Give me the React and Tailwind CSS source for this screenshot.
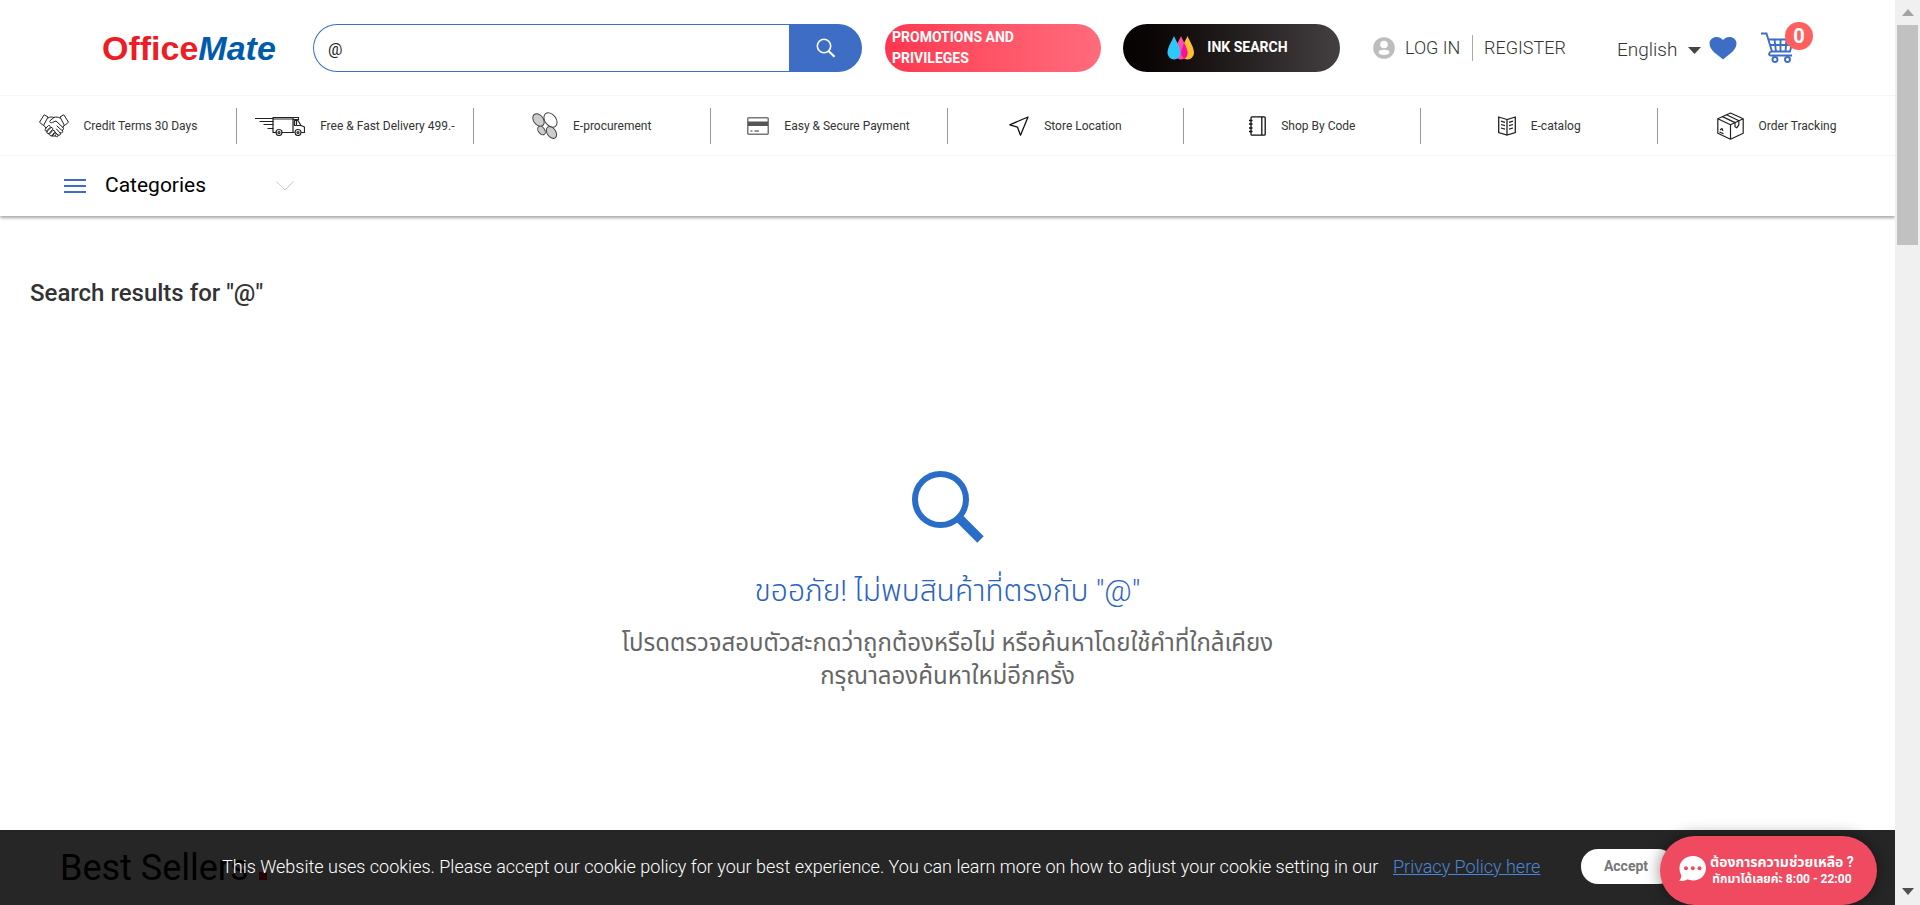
import React from "react";

const line = { fill: "none", stroke: "#222", strokeWidth: 1.2, strokeLinejoin: "round", strokeLinecap: "round" };

function Handshake() {
  return (
    <svg width="30" height="24" viewBox="0 0 30 24" {...line} strokeWidth="1">
      <path d="M5.5 1 9 3 4.500 11.500.800 8.500ZM24.500 1 21 3l4.500 8.500 3.700-3Z" />
      <path d="M9 4c2-1.500 4-1 6-.5 2-.8 4-.5 6 .5M15 3.500l-4 3.200c-1 1.300.8 2.800 2.500 1.700L17 7l7 6.500c1.500 2-.5 3.300-2 2.200L18 12" />
      <path d="M5 11.500l2 2.500M7 14l2.500-2.500c1.500-.5 2 1 1.500 2L7.500 17C6 17.500 5.500 15.500 7 14ZM8 17.500l4-4c1.800-.5 2 1.500 1.500 2L10 19.500c-1.500.8-2.500-.8-2-2ZM10.500 20l3.500-3.700c1.500-.3 2 1 1.500 2L13 21.500c-1 .8-2.800 0-2.500-1.500ZM13 22l2.500-2.500c1.500-.3 2.200 1.300.5 2.500h-3" />
      <path d="M16 22c2 1.500 3.500.5 3-1l-3-3M19 21c2 1 3-.5 2.200-2L17.500 15M21.500 18.800c2 .8 2.800-1 2-2.500M25 11.500l-1 2" />
    </svg>
  );
}

function Truck() {
  return (
    <svg width="50" height="20" viewBox="0 0 50 20" {...line}>
      <path d="M0 2.500h18M5 5.500h13M9 8.500h9M13 12.500h5" />
      <path d="M21 16.500h-3V1.500h25.500v2H38M18 3h20M38 1.500v15M27 16.500h12M46.500 16.500H49.500V11L46 9.500 43 4.500h-3.500V9.500H46M41.500 5v3.500" />
      <circle cx="24" cy="16.500" r="3" /><circle cx="24" cy="16.500" r="1" />
      <circle cx="43" cy="16.500" r="3" /><circle cx="43" cy="16.500" r="1" />
    </svg>
  );
}

function Petals() {
  return (
    <svg width="26" height="27" viewBox="0 0 26 27" fill="#ccc" stroke="#444" strokeWidth="1">
      <ellipse cx="6.500" cy="8" rx="4.800" ry="7" transform="rotate(-38 6.500 8)" />
      <ellipse cx="18.500" cy="8" rx="5.500" ry="8" transform="rotate(-38 18.500 8)" fill="#fff" />
      <ellipse cx="9.500" cy="18.500" rx="3.200" ry="4.800" transform="rotate(-35 9.500 18.500)" />
      <ellipse cx="19.500" cy="20.500" rx="4.300" ry="6.500" transform="rotate(-35 19.500 20.500)" />
    </svg>
  );
}

function Card() {
  return (
    <svg width="22" height="18" viewBox="0 0 22 18">
      <rect x=".75" y=".75" width="20.500" height="16.500" rx="1" fill="none" stroke="#777" strokeWidth="1.500" />
      <path d="M1 4.500h20v4.500H1Z" fill="#555" />
      <path d="M3.500 14h2M7.500 14h4.500" stroke="#777" strokeWidth="1.500" />
    </svg>
  );
}

function Arrow() {
  return (
    <svg width="20" height="20" viewBox="0 0 20 20" fill="none" stroke="#111" strokeWidth="1.300" strokeLinejoin="round">
      <path d="M19 1 .8 8.800 8.500 11.200 11.500 19.200Z" />
    </svg>
  );
}

function Notebook() {
  return (
    <svg width="17" height="20" viewBox="0 0 17 20" fill="none" stroke="#111" strokeWidth="1.300">
      <rect x="2" y=".8" width="14.200" height="18.400" rx="1" />
      <path d="M12.800 1v18" />
      <path d="M0 4.500h3.500M0 8h3.500M0 12h3.500M0 15.500h3.500" />
    </svg>
  );
}

function Book() {
  return (
    <svg width="18" height="20" viewBox="0 0 18 20" fill="none" stroke="#222" strokeWidth="1.300">
      <path d="M9 3.500.7 1v15.500L9 19l8.300-2.500V1ZM9 3.500V19" />
      <path d="M3 5.200l4 1.200M3 8.500l4 1.200M3 12l4 1.200M15 5.200l-4 1.200M15 8.500l-4 1.200M15 12l-4 1.200" />
    </svg>
  );
}

function Box() {
  return (
    <svg width="27" height="28" viewBox="0 0 27 28" fill="none" stroke="#222" strokeWidth="1.200" strokeLinejoin="round">
      <path d="M13.500 1 .8 6.800v14.400l12.700 6 12.700-6V6.800ZM.8 6.800l12.700 6 12.700-6M13.500 12.800v14.400" />
      <path d="M9.500 2.800 22 8.800M5.500 4.600 18 10.600M18 10.600v4.200l1.800 1 2-3V8.800M2.500 20l4 1.800M3 18l2-1.500 1 2.500" />
    </svg>
  );
}

const features = [
  ["Credit Terms 30 Days", Handshake],
  ["Free & Fast Delivery 499.-", Truck],
  ["E-procurement", Petals],
  ["Easy & Secure Payment", Card],
  ["Store Location", Arrow],
  ["Shop By Code", Notebook],
  ["E-catalog", Book],
  ["Order Tracking", Box],
];

function TopBar() {
  return (
    <div className="flex h-24 items-center border-b border-[#f5f5f5] pl-[102px] pr-[82px]">
      <a href="#" aria-label="OfficeMate" className="mr-[35px] w-44 whitespace-nowrap font-['Liberation_Sans',sans-serif] text-[34px] font-bold leading-9 text-[#ee1c25]">
        Office<span className="italic text-[#005bab]">Mate</span>
      </a>
      <form className="mr-[23px] flex h-12 flex-1" onSubmit={(e) => e.preventDefault()}>
        <input aria-label="Search products" defaultValue="@" className="min-w-0 flex-1 rounded-l-3xl border border-r-0 border-[#3d6dc4] px-3.5 pt-1 text-[16px] text-[#222] outline-none" />
        <button aria-label="Search" className="flex w-[73px] items-center justify-center rounded-r-3xl bg-[#3d6dc4]">
          <svg width="20" height="20" viewBox="0 0 20 20" fill="none" stroke="#fff" strokeWidth="1.600">
            <circle cx="8" cy="8" r="6.700" />
            <path d="m12.500 13 6 5.800" strokeWidth="2.200" />
          </svg>
        </button>
      </form>
      <a href="#" className="mr-[22px] flex h-12 w-[216px] items-center rounded-3xl bg-linear-to-r from-[#ff354f] to-[#ff6b7d] px-[7px] text-[14px] font-bold leading-[21px] text-white">
        <span className="w-36">PROMOTIONS AND PRIVILEGES</span>
      </a>
      <a href="#" className="mr-[33px] flex h-12 w-[217px] items-center justify-center gap-3 rounded-3xl bg-linear-to-r from-[#050202] to-[#444041] pr-2 text-[14px] font-bold text-white">
        <svg width="28" height="24" viewBox="0 0 28 24">
          <path d="M20.500 0C23 6 27 11 27 17a6.500 6.500 0 0 1-13 0C14 11 18 6 20.500 0Z" fill="#fdc02f" />
          <path d="M14 0c2.500 6 6.500 11 6.500 17a6.500 6.500 0 0 1-13 0C7.500 11 11.500 6 14 0Z" fill="#ff4fa8" />
          <path d="M17 7c2 4 3.500 7 3.500 10 0 3-1.500 5-3.500 6-1-1.500-3-3-3-6s2-6 3-10Z" fill="#fb0f9a" />
          <path d="M7 0c2.500 6 6.500 11 6.500 17a6.500 6.500 0 0 1-13 0C.5 11 4.500 6 7 0Z" fill="#2fc8fb" />
        </svg>
        INK SEARCH
      </a>
      <div className="flex items-center text-[18px] font-light text-[#333]">
        <svg className="mr-2.5" width="22" height="22" viewBox="0 0 22 22">
          <circle cx="11" cy="11" r="10.800" fill="#bdbdbd" />
          <circle cx="11" cy="7.500" r="3.800" fill="#fff" />
          <path d="M5.500 15c0-3 11-3 11 0 0 4-11 4-11 0Z" fill="#fff" />
        </svg>
        <a href="#" className="w-[67px]">LOG IN</a>
        <a href="#" className="w-[145px] border-l border-[#aaa] pl-[11px] leading-[26px]">REGISTER</a>
        <label className="relative flex items-center pt-1.5">
          <select aria-label="Language" className="w-[84px] appearance-none bg-transparent text-[19px] font-light outline-none">
            <option>English</option>
          </select>
          <svg className="pointer-events-none absolute right-0" width="13" height="7" viewBox="0 0 13 7"><path d="M0 0h13L6.500 7Z" fill="#444" /></svg>
        </label>
        <a href="#" aria-label="Wish list" className="ml-2">
          <svg width="28" height="24" viewBox="0 0 28 24"><path d="M14 23.500C9 19 .5 14.500.500 7.500.5 1 9.500-1.500 14 4 18.500-1.500 27.500 1 27.500 7.500c0 7-8.500 11.500-13.500 16Z" fill="#3d6dc4" /></svg>
        </a>
        <a href="#" aria-label="Cart, 0 items" className="relative ml-6 w-[52px]">
          <svg width="34" height="31" viewBox="0 0 34 31" fill="none" stroke="#3d6dc4" strokeWidth="1.900">
            <path d="M0 1.500h5.500l5.500 18M7 7.500h25l-3 12H10.500M8.500 13h22M13.500 7.500l1.500 12M19.500 7.500v12M25.500 7.500l-1 12M11 19.500c-3 0-4 4-1.500 4H31" />
            <circle cx="14" cy="27.500" r="2.500" /><circle cx="26.500" cy="27.500" r="2.500" />
          </svg>
          <span className="absolute -top-2.5 right-0 flex size-7 items-center justify-center rounded-full bg-[#ff605f] text-[20px] font-bold text-white">0</span>
        </a>
      </div>
    </div>
  );
}

function SiteHeader() {
  return (
    <header className="bg-white shadow-[0_2px_3px_rgba(0,0,0,0.35)]">
      <TopBar />
      <nav aria-label="Services" className="grid h-[60px] grid-cols-8 items-center border-b border-[#f5f5f5]">
        {features.map(([label, Icon], i) => (
          <a href="#" key={label} className={`flex h-9 items-center justify-center gap-[15px] whitespace-nowrap text-[12px] text-[#333] ${i < 7 ? "border-r border-[#999]" : ""}`}>
            <Icon />
            {label}
          </a>
        ))}
      </nav>
      <button className="flex h-[60px] items-center pl-16 text-[21px] text-black">
        <svg className="mr-[19px]" width="22" height="14" viewBox="0 0 22 14" stroke="#3d6dc4" strokeWidth="1.800"><path d="M0 1h22M0 7h22M0 13h22" /></svg>
        <span className="w-[171px] text-left">Categories</span>
        <svg width="18" height="10" viewBox="0 0 18 10" fill="none" stroke="#ccc"><path d="m.5.500 8.500 8.500L17.500.500" /></svg>
      </button>
    </header>
  );
}

function CookieBar() {
  return (
    <div className="absolute inset-x-0 bottom-0 flex h-[75px] items-center bg-black/85 pb-0.5 pl-[222px] text-[18px] text-white">
      <p className="w-[1171px] whitespace-nowrap font-light">
        This Website uses cookies. Please accept our cookie policy for your best experience. You can learn more on how to adjust your cookie setting in our
      </p>
      <a href="#" className="w-[188px] font-light text-[#4b86d8] underline">Privacy Policy here</a>
      <button className="h-[35px] w-[94px] rounded-[17px] bg-white pr-1 text-[14px] font-bold text-[#777]">Accept</button>
    </div>
  );
}

function ChatButton() {
  return (
    <button className="absolute bottom-0 right-[18px] flex h-[69px] w-[217px] items-center gap-1 rounded-[35px] bg-[#f04a60] pl-[19px] text-white shadow-[0_0_16px_rgba(0,0,0,0.45)]">
      <svg className="mb-1" width="27" height="25" viewBox="0 0 27 25">
        <path d="M14 0C21.500 0 27 5 27 12s-5.500 12.500-13 12.500c-2.500 0-4-.5-5.500-1.200C6 25 3 25.200.2 24.500 2 23 2.500 21 2 18.500 1 17 .5 14.500.5 12 .5 5 6.500 0 14 0Z" fill="#fff" />
        <circle cx="7" cy="12.200" r="2" fill="#f04a60" /><circle cx="13.800" cy="12.200" r="2" fill="#f04a60" /><circle cx="20.500" cy="12.200" r="2" fill="#f04a60" />
      </svg>
      <span className="whitespace-nowrap text-center font-bold">
        <span className="block text-[14px] leading-[17px]">ต้องการความช่วยเหลือ ?</span>
        <span className="block text-[12px] leading-[17px]">ทักมาได้เลยค่ะ 8:00 - 22:00</span>
      </span>
    </button>
  );
}

function ScrollBar() {
  return (
    <div aria-hidden="true" className="flex w-[25px] shrink-0 flex-col items-center justify-between bg-[#f0f0f0] pb-2.5">
      <div className="flex w-[21px] flex-col items-center">
        <svg className="my-[9px]" width="12" height="7" viewBox="0 0 12 7"><path d="M6 0l6 7H0Z" fill="#a3a3a3" /></svg>
        <div className="h-[220px] w-full bg-[#c1c1c1]" />
      </div>
      <svg width="12" height="7" viewBox="0 0 12 7"><path d="M0 0h12L6 7Z" fill="#505050" /></svg>
    </div>
  );
}

export default function App() {
  return (
    <div className="flex h-screen overflow-hidden bg-white font-[Roboto,'Noto_Sans_Thai','Noto_Sans',sans-serif]">
      <div className="relative min-w-0 flex-1 overflow-hidden">
        <SiteHeader />
        <main>
          <h1 className="px-[30px] pt-[61px] text-[24px] font-medium leading-8 text-[#333]">Search results for "@"</h1>
          <section className="flex flex-col items-center pt-[162px] text-center">
            <svg width="72" height="72" viewBox="0 0 72 72" fill="none" stroke="#2a6dc9">
              <circle cx="28.500" cy="28.500" r="25.500" strokeWidth="6" />
              <path d="m46.500 46.500 22 22" strokeWidth="9" />
            </svg>
            <h2 className="mt-6 text-[30px] font-light leading-[48px] text-[#2a63c0]">ขออภัย! ไม่พบสินค้าที่ตรงกับ "@"</h2>
            <p className="mt-3 text-[24px] leading-[33px] text-[#666]">
              โปรดตรวจสอบตัวสะกดว่าถูกต้องหรือไม่ หรือค้นหาโดยใช้คำที่ใกล้เคียง<br />
              กรุณาลองค้นหาใหม่อีกครั้ง
            </p>
          </section>
          <h2 className="flex items-baseline gap-2.5 px-[60px] pt-[148px] text-[36px] leading-[54px] text-black">
            Best Sellers <span className="size-2 bg-[#ee1c25]" />
          </h2>
        </main>
        <CookieBar />
        <ChatButton />
      </div>
      <ScrollBar />
    </div>
  );
}
